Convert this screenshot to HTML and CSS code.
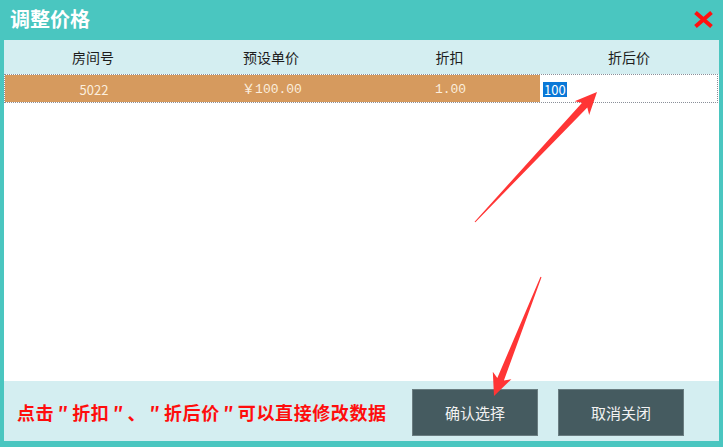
FILE: index.html
```html
<!DOCTYPE html>
<html lang="zh-CN">
<head>
    <meta charset="UTF-8">
    <title>调整价格</title>
    <link rel="stylesheet" href="styles.css">
</head>
<body>
    <div class="dialog">
        <div class="titlebar">
            <h1 class="title">调整价格</h1>
            <svg class="close" width="19" height="17" viewBox="0 0 19 17">
                <path d="M1.5 1.5 L17.5 15.5 M17.5 1.5 L1.5 15.5" stroke="#ff1010" stroke-width="4" fill="none"/>
            </svg>
        </div>

        <div class="panel">
            <div class="grid-row head-row">
                <div class="cell">房间号</div>
                <div class="cell">预设单价</div>
                <div class="cell">折扣</div>
                <div class="cell">折后价</div>
            </div>
            <div class="grid-row data-row">
                <div class="cell">5022</div>
                <div class="cell mono">￥100.00</div>
                <div class="cell mono">1.00</div>
                <div class="cell edit-cell"><span class="selected">100</span></div>
            </div>
            <div class="blank"></div>
            <div class="footer">
                <div class="hint">点击<span class="q">″</span>折扣<span class="q">″</span>、<span class="q">″</span>折后价<span class="q">″</span>可以直接修改数据</div>
                <div class="buttons">
                    <button class="btn">确认选择</button>
                    <button class="btn">取消关闭</button>
                </div>
            </div>
        </div>

        <!-- annotation arrows drawn over the dialog -->
        <svg class="arrows" width="723" height="447" viewBox="0 0 723 447">
            <polygon fill="#ff3535" points="474.6,221.7 582.1,102.7 574.6,101.3 597,92 589.2,115 587.3,107.5 475.4,222.3"/>
            <polygon fill="#ff3535" points="540.5,276.8 497.3,378 492.8,371.8 494,396 511.4,379.2 503.9,380.6 541.5,277.2"/>
        </svg>
    </div>
</body>
</html>
```

FILE: styles.css
```css
:root {
    --teal: #4ac6c0;
    --pale: #d4eef1;
    --orange: #d69a5e;
    --slate: #455b60;
}

* {
    margin: 0;
    padding: 0;
    box-sizing: border-box;
    font-family: "Noto Sans CJK SC", "Noto Sans", sans-serif;
}

body {
    width: 723px;
    height: 447px;
    overflow: hidden;
}

.dialog {
    position: relative;
    width: 723px;
    height: 447px;
    background-color: var(--teal);
    display: flex;
    flex-direction: column;
    padding: 0 4px 6px 4px;
}

.titlebar {
    height: 40px;
    display: flex;
    align-items: center;
    justify-content: space-between;
    padding: 0 6px 2px 6px;
}

.title {
    color: #fff;
    font-size: 20px;
    font-weight: 700;
    line-height: 1;
}

.close {
    display: block;
}

.panel {
    flex: 1;
    display: flex;
    flex-direction: column;
    background-color: #fff;
}

.grid-row {
    display: grid;
    grid-template-columns: 178px 178px 179px 1fr;
}

.cell {
    display: flex;
    align-items: center;
    justify-content: center;
}

.head-row {
    height: 34px;
    background-color: var(--pale);
    font-size: 14px;
    color: #1c1c1c;
}

.data-row {
    height: 29px;
    margin-right: 1px;
    border: 1px dotted #8a8f99;
    font-size: 13px;
    line-height: 15px;
    color: #fbeedd;
}

.data-row .cell {
    background-color: var(--orange);
    padding-top: 1px;
}

.mono {
    font-family: "Liberation Mono", "Noto Sans CJK SC", monospace;
}

.data-row .edit-cell {
    background-color: #fff;
    justify-content: flex-start;
    padding-left: 3px;
}

.selected {
    background-color: #0a78d7;
    color: #fff;
    font-size: 13px;
    line-height: 15px;
    padding: 0 1px;
}

.blank {
    flex: 1;
}

.footer {
    height: 60px;
    background-color: var(--pale);
    display: flex;
    align-items: flex-start;
    justify-content: space-between;
    padding: 8px 35px 0 13px;
}

.hint {
    color: #ff0d0d;
    font-size: 18px;
    font-weight: 700;
    line-height: 47px;
    letter-spacing: 0.6px;
}

.hint .q {
    display: inline-block;
    width: 18px;
    text-align: center;
}

.buttons {
    display: flex;
    gap: 20px;
}

.btn {
    width: 126px;
    height: 47px;
    background-color: var(--slate);
    border: 1px solid #6a7d81;
    color: #f2f2f2;
    font-size: 15px;
}

.arrows {
    position: absolute;
    left: 0;
    top: 0;
    pointer-events: none;
}
```
